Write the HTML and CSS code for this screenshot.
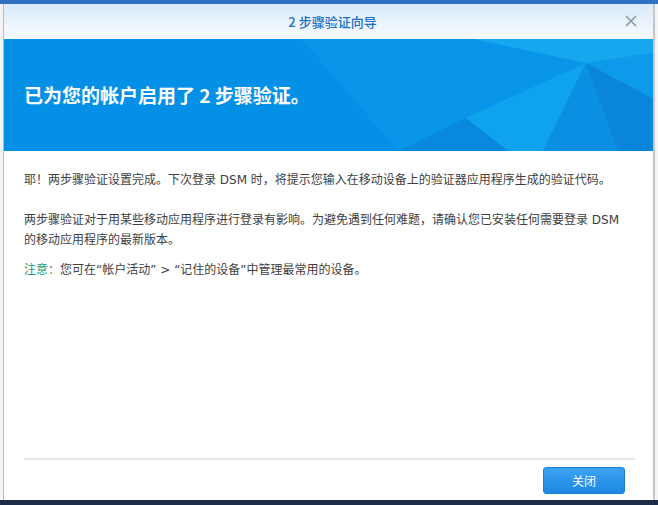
FILE: index.html
```html
<!DOCTYPE html>
<html lang="zh-CN">
<head>
<meta charset="utf-8">
<title>2 步骤验证向导</title>
<link rel="stylesheet" href="styles.css">
</head>
<body>
<div class="topbar"></div>
<div class="stage">
  <div class="gutter gutter-left"></div>
  <div class="window">
    <div class="win-header">
      <span class="win-title">2 步骤验证向导</span>
      <span class="win-close" aria-label="关闭">
        <svg width="12" height="12" viewBox="0 0 12 12"><path d="M1 1 L11 11 M11 1 L1 11" stroke="#8e98a2" stroke-width="1.6" fill="none"/></svg>
      </span>
    </div>
    <div class="banner">
      <svg class="banner-art" viewBox="0 0 650 112" preserveAspectRatio="none">
        <polygon points="298,0 650,0 650,112 395,112" fill="#0995ea"/>
        <polygon points="470,0 650,0 650,14 583,24" fill="#17a7ef"/>
        <polygon points="583,24 650,14 650,60" fill="#0d9aeb"/>
        <polygon points="583,24 462,79 505,112 540,112" fill="#0fa2ed"/>
        <polygon points="462,79 395,112 505,112" fill="#0888de"/>
        <polygon points="583,24 650,60 650,112 540,112" fill="#0986da"/>
        <polygon points="583,24 615,112 540,112" fill="#0a8fe3"/>
      </svg>
      <h1 class="banner-title">已为您的帐户启用了 2 步骤验证。</h1>
    </div>
    <div class="content">
      <p class="para">耶！两步骤验证设置完成。下次登录 DSM 时，将提示您输入在移动设备上的验证器应用程序生成的验证代码。</p>
      <p class="para">两步骤验证对于用某些移动应用程序进行登录有影响。为避免遇到任何难题，请确认您已安装任何需要登录 DSM 的移动应用程序的最新版本。</p>
      <p class="para note"><span class="note-label">注意：</span>您可在“帐户活动” &gt; “记住的设备”中管理最常用的设备。</p>
    </div>
    <div class="footer">
      <button class="btn-primary">关闭</button>
    </div>
  </div>
  <div class="gutter gutter-right"></div>
</div>
<div class="taskbar"></div>
</body>
</html>
```

FILE: styles.css
```css
html, body {
  margin: 0;
  padding: 0;
}
body {
  width: 658px;
  height: 505px;
  display: flex;
  flex-direction: column;
  background: #ffffff;
  font-family: "DejaVu Sans", "Noto Sans CJK SC", sans-serif;
  overflow: hidden;
}
.topbar {
  height: 4px;
  background: #2f70c2;
  flex: none;
}
.stage {
  flex: 1;
  display: flex;
  min-height: 0;
}
.gutter {
  flex: none;
  width: 3px;
  background: #f4f4f4;
}
.window {
  flex: 1;
  display: flex;
  flex-direction: column;
  background: #fff;
  border-left: 1px solid #bcbcbc;
  border-right: 2px solid #c6c6c6;
  min-width: 0;
}
.win-header {
  height: 35px;
  flex: none;
  display: flex;
  align-items: center;
  justify-content: center;
  position: relative;
  background: linear-gradient(to bottom, #d8eaf9, #fafcff);
}
.win-title {
  font-family: "Noto Sans CJK SC", sans-serif;
  font-size: 13px;
  font-weight: 500;
  color: #1d6fc4;
  margin-left: 8px;
}
.win-close {
  position: absolute;
  right: 16px;
  top: 11px;
  width: 12px;
  height: 12px;
  display: flex;
}
.banner {
  height: 112px;
  flex: none;
  background: #0590e8;
  position: relative;
  display: flex;
  align-items: center;
  overflow: hidden;
}
.banner-art {
  position: absolute;
  left: 0;
  top: 0;
  width: 100%;
  height: 100%;
}
.banner-title {
  position: relative;
  margin: 0 0 0 20px;
  padding-bottom: 2px;
  font-family: "Noto Sans CJK SC", sans-serif;
  font-size: 19px;
  font-weight: 700;
  color: #ffffff;
}
.content {
  flex: 1;
  padding: 19px 24px 0 20px;
}
.para {
  margin: 0 0 20px 0;
  font-size: 12px;
  line-height: 20px;
  color: #404040;
}
.para + .note {
  margin-top: -10px;
}
.note-label {
  color: #1d9a6c;
}
.footer {
  flex: none;
  margin: 0 18px 0 20px;
  border-top: 2px solid #e6e6e6;
  padding: 7px 10px 6px 0;
  display: flex;
  justify-content: flex-end;
}
.btn-primary {
  width: 82px;
  height: 27px;
  border: 1px solid #1b7fd8;
  border-radius: 3px;
  background: linear-gradient(to bottom, #3aa3f2, #1e88e2);
  color: #ffffff;
  font-family: "Noto Sans CJK SC", sans-serif;
  font-size: 12px;
  padding: 0;
  cursor: pointer;
}
.taskbar {
  height: 5px;
  flex: none;
  background: #1b2c4a;
}
```
